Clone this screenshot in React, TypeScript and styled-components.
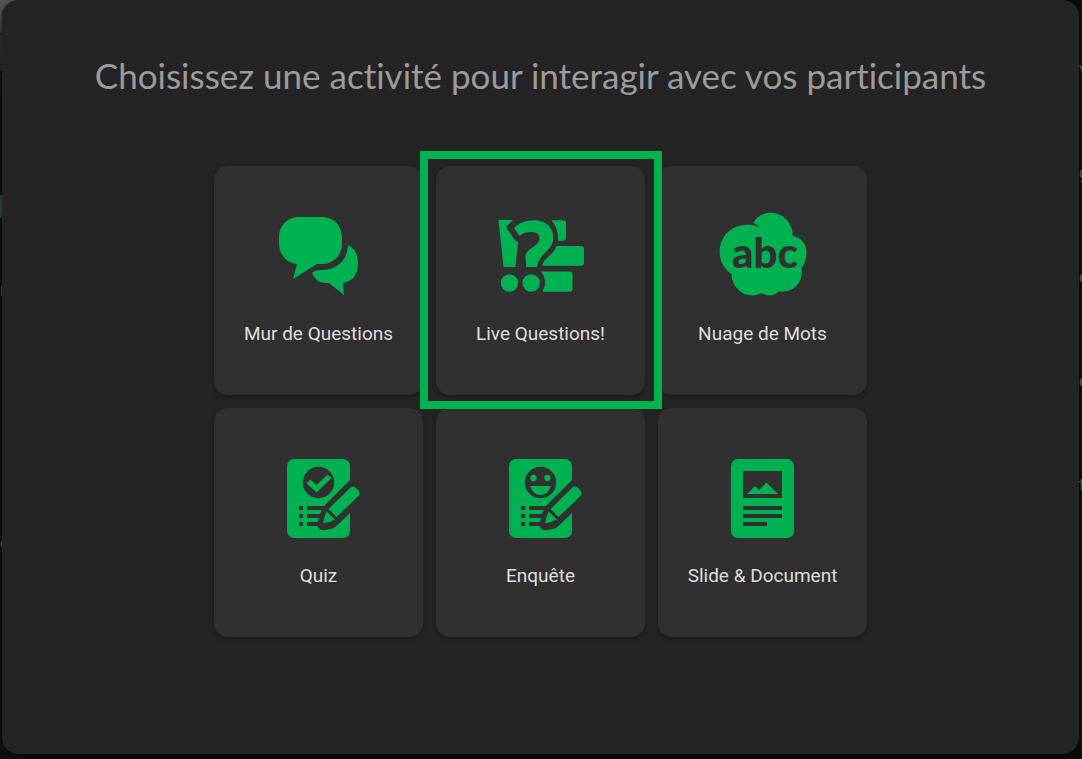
import React from "react";
import styled, { createGlobalStyle } from "styled-components";

const GREEN = "#00b152";
const CARD = "#303030";

const GlobalStyle = createGlobalStyle`
  *, *::before, *::after { box-sizing: border-box; }
  body { margin: 0; background: #0b0b0b; font-family: Roboto, sans-serif; }
`;

const Page = styled.div`
  position: relative;
  display: flex;
  min-height: 100vh;
  padding: 0 3px 5px 2px;
  overflow: hidden;
`;

const Rail = styled.div`
  position: absolute;
  display: flex;
  flex-direction: column;
  overflow: hidden;
  color: #5a5a58;
  font-size: 18px;
  line-height: 24px;
`;

const LeftRail = styled(Rail)`
  inset: 0 auto 0 0;
  width: 24px;
  padding-top: 278px;
  gap: 229px;
  background: linear-gradient(#55565a 0, #3c3d40 33px, #000 33px, #000 34px, #323234 34px, #2a2a2c 71px, #000 71px, #000 72px, #181818 73px, #0f0f0f 100px, #0f0f0f 195px, #0c4a27 195px, #2d4a3a 201px, #2d4a3a 213px, #0c4a27 218px, #101010 218px, #101010 100%);
`;

const RightRail = styled(Rail)`
  inset: 0 0 0 auto;
  width: 3px;
  padding-top: 57px;
  gap: 80px;
  background: #0e0e0c;
`;

const Dialog = styled.main`
  position: relative;
  flex: 1;
  display: flex;
  flex-direction: column;
  align-items: center;
  padding: 48px 24px;
  border-radius: 16px;
  background: #242424;
  box-shadow: 0 2px 4px rgba(0, 0, 0, 0.5);
`;

const Title = styled.h1`
  margin: 0 0 64px;
  color: #9b9b9b;
  font: 400 35px/54px Lato, sans-serif;
  font-variant-ligatures: none;
  text-align: center;
`;

const Grid = styled.div`
  display: grid;
  grid-template-columns: repeat(3, 209px);
  grid-auto-rows: 229px;
  gap: 13px;
`;

const Cell = styled.div<{ $highlighted?: boolean }>`
  position: relative;
  display: flex;
  z-index: ${(p) => (p.$highlighted ? 1 : 0)};

  &::after {
    content: ${(p) => (p.$highlighted ? '""' : "none")};
    position: absolute;
    inset: -15px -17px -14px -16px;
    border: 8px solid ${GREEN};
    background: transparent;
    pointer-events: none;
  }
`;

const CardButton = styled.button`
  flex: 1;
  display: flex;
  flex-direction: column;
  align-items: center;
  gap: 16px;
  padding: 40px 8px;
  border: 0;
  border-radius: 14px;
  background: ${CARD};
  color: #dedede;
  font: 400 19px/24px Roboto, sans-serif;
  box-shadow: 0 2px 5px rgba(0, 0, 0, 0.3);
  cursor: pointer;
`;

const Icon = styled.svg`
  width: 100px;
  height: 100px;
  fill: ${GREEN};
`;

const CloudText = styled.text`
  fill: ${CARD};
  font: 900 42px Lato, sans-serif;
`;

const Bubbles = () => (
  <Icon viewBox="1 0 100 100" aria-hidden="true">
    <path d="M31 11H54C66 11 74 20 74 32V37C74 49 66 58 54 58H49L25 73L29 58C19 57 11 49 11 37V32C11 20 19 11 31 11Z" />
    <path d="M80 39Q90 44 90 57Q90 74 75 77L76 89L61 77H58Q48 77 44 67Q47 64 53 64C69 64 79 55 80 39Z" />
  </Icon>
);

const LiveQuestions = () => (
  <Icon viewBox="1 0 100 100" aria-hidden="true">
    <path d="M8.500 14H23L16 21L24 33Q25.500 35.500 28 35.700L25.500 61H13.500Z" />
    <path d="M24 22C29 17 36 14.300 43 14.300C56 14.300 63.300 21 63.300 32C63.300 45 48 48 47.200 61H36.200L35.400 51C35.400 42 49.500 41 49.500 32C49.500 28 46 26 41 26C36 26 32.500 27.500 29.500 30Z" />
    <path d="M61 14.300H73Q76 14.300 76 17.300V31.500Q76 34.700 73 34.700H68Q68.500 21 61 14.300Z" />
    <path d="M66.500 40H91Q94 40 94 43V56.500Q94 59.700 91 59.700H52.500C53 52 63 50 66.500 40Z" />
    <path d="M51 65.500H79.500Q82.500 65.500 82.500 68.500V82.500Q82.500 85.700 79.500 85.700H52.600Q58.500 75 51 65.500Z" />
    <circle cx="19.500" cy="77" r="8.700" />
    <circle cx="41.200" cy="77" r="8.700" />
  </Icon>
);

const Cloud = () => (
  <Icon viewBox="0 0 100 100" aria-hidden="true">
    <path d="M40.200 17C44 10 50 6.700 57.500 6.700C70 6.700 80 17 79.800 30C88 31 93.500 38 93.500 46C93.500 54 91 59 88.500 62C90.500 75 82 87 66 85.500Q58 92.500 48.500 87C36 94 19 85 18.500 68C11 63 6.700 55 6.700 46C6.700 27 24 13.500 46.500 20.700Q44 18 40.200 17Z" />
    <CloudText x="52" y="62" textAnchor="middle">abc</CloudText>
  </Icon>
);

const Sheet = ({ children }: { children: React.ReactNode }) => (
  <Icon viewBox="1 0 100 100" aria-hidden="true">
    <rect x="19" y="11" width="63" height="79" rx="7" />
    <circle cx="50.500" cy="34.500" r="15.700" fill={CARD} />
    {children}
    <path d="M31 58h4v4h-4zM31 66h4v4h-4zM31 74h4v4h-4zM39 58h22v4H39zM39 66h16v4H39zM39 74h12v4H39z" fill={CARD} />
    <path d="M83 31L55 59Q51 66 49.500 76Q49.500 83 57.500 82Q66 81 69 77.500L83 64Z" fill={CARD} />
    <path d="M60.500 61L82.500 39.500Q85 37.500 88 40L90.500 42.500Q92.500 45.500 90.500 48L68.500 69Z" />
    <path d="M58.500 63.500L67 71.500Q61 74.500 55 75.500Q56 69 58.500 63.500Z" />
  </Icon>
);

const Quiz = () => (
  <Sheet>
    <path d="M38.500 35.500L42.500 31.500L48.500 37L59.500 26.500L63.500 30L48.500 44.500Z" />
  </Sheet>
);

const Survey = () => (
  <Sheet>
    <circle cx="43.500" cy="30" r="3.200" />
    <circle cx="57.500" cy="30" r="3.200" />
    <path d="M40 38H61Q58 47 50.500 47T40 38Z" />
  </Sheet>
);

const Slide = () => (
  <Icon viewBox="1 0 100 100" aria-hidden="true">
    <rect x="19" y="11" width="63" height="79" rx="7" />
    <path d="M31 23h39v27H31zM31 58h39v4H31zM31 66h39v4H31zM31 74h24v4H31z" fill={CARD} />
    <path d="M35 46L43 38L47 42L54.500 34.500L66 46Z" />
  </Icon>
);

const activities = [
  { label: "Mur de Questions", Art: Bubbles },
  { label: "Live Questions!", Art: LiveQuestions, highlighted: true },
  { label: "Nuage de Mots", Art: Cloud },
  { label: "Quiz", Art: Quiz },
  { label: "Enquête", Art: Survey },
  { label: "Slide & Document", Art: Slide },
];

export default function App() {
  return (
    <>
      <GlobalStyle />
      <Page>
        <LeftRail aria-hidden="true">
          {["n", "e"].map((t) => (
            <span key={t}>{t}</span>
          ))}
        </LeftRail>
        <RightRail aria-hidden="true">
          {["v", "g", "e", "e", "t"].map((t, i) => (
            <span key={i}>{t}</span>
          ))}
        </RightRail>
        <Dialog>
          <Title>Choisissez une activité pour interagir avec vos participants</Title>
          <Grid>
            {activities.map(({ label, Art, highlighted }) => (
              <Cell key={label} $highlighted={highlighted}>
                <CardButton type="button">
                  <Art />
                  {label}
                </CardButton>
              </Cell>
            ))}
          </Grid>
        </Dialog>
      </Page>
    </>
  );
}
